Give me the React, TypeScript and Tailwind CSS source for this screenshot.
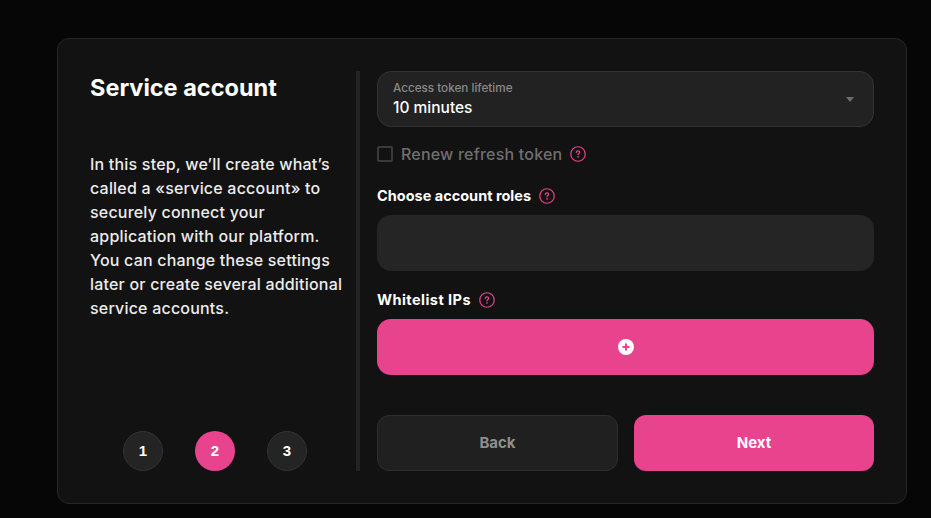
const font = "font-['Inter','Noto_Sans',sans-serif]";

const HelpIcon = () => (
  <svg width="16" height="16" viewBox="0 0 16 16" fill="none" className="shrink-0">
    <circle cx="8" cy="8" r="7.25" stroke="#e8438d" strokeWidth="1.2" />
    <path d="M6.3 6.4c0-.9.7-1.5 1.7-1.5s1.7.6 1.7 1.4c0 1.2-1.7 1.3-1.7 2.5" stroke="#e8438d" strokeWidth="1.2" strokeLinecap="round" />
    <circle cx="8" cy="10.9" r="0.8" fill="#e8438d" />
  </svg>
);

const PlusIcon = () => (
  <svg width="16" height="16" viewBox="0 0 16 16">
    <circle cx="8" cy="8" r="8" fill="#fff" />
    <path d="M8 4.5v7M4.5 8h7" stroke="#e8438d" strokeWidth="2" />
  </svg>
);

const steps = [1, 2, 3];

export default function App() {
  return (
    <div className={`${font} min-h-[518px] h-[518px] overflow-hidden bg-[#060606] pt-[38px] pl-[57px]`}>
      <div className="flex w-[850px] h-[466px] rounded-[12px] border border-[#262626] bg-[#121212] pt-[32px] pl-[32px]">
        {/* left column */}
        <div className="flex flex-col w-[270px] h-[400px] border-r-4 border-[#232323]">
          <h1 className="mt-[1px] text-[23.5px] leading-[32px] font-bold text-white">Service account</h1>
          <p className="mt-[48px] w-[262px] text-[16px] tracking-[0.2px] leading-[24px] font-medium text-[#ececec]">
            In this step, we’ll create what’s called a «service account» to securely connect your application with our platform. You can change these settings later or create several additional service accounts.
          </p>
          <div className="mt-auto flex gap-[32px] pl-[33px]">
            {steps.map((n) => (
              <div
                key={n}
                className={
                  n === 2
                    ? "flex items-center justify-center w-[40px] h-[40px] rounded-full bg-[#e8438d] text-white text-[15px] font-semibold font-['Liberation_Sans',sans-serif]"
                    : "flex items-center justify-center w-[40px] h-[40px] rounded-full bg-[#242424] border border-[#333333] text-white text-[15px] font-semibold font-['Liberation_Sans',sans-serif]"
                }
              >
                {n}
              </div>
            ))}
          </div>
        </div>

        {/* right column */}
        <div className="flex flex-col w-[497px] h-[400px] ml-[17px]">
          <div className="flex items-center justify-between h-[56px] rounded-[14px] border border-[#333333] bg-[#222222] pl-[15px] pr-[19px]">
            <div>
              <div className="text-[11.7px] leading-[14px] font-medium text-[#8a8a8a]">Access token lifetime</div>
              <div className="mt-[3px] text-[15.5px] leading-[20px] font-medium text-white">10 minutes</div>
            </div>
            <div className="w-0 h-0 border-x-[4px] border-x-transparent border-t-[5px] border-t-[#6e6e6e]" />
          </div>

          <div className="flex items-center mt-[18px] h-[18px]">
            <div className="w-[16px] h-[16px] rounded-[2px] border-2 border-[#3a3a3a]" />
            <span className="ml-[8px] text-[16px] tracking-[0.2px] font-medium text-[#6f6f6f]">Renew refresh token</span>
            <span className="ml-[8px] flex"><HelpIcon /></span>
          </div>

          <div className="flex items-center mt-[24px] h-[18px]">
            <span className="text-[14.5px] font-bold text-white">Choose account roles</span>
            <span className="ml-[8px] flex"><HelpIcon /></span>
          </div>

          <div className="mt-[10px] h-[56px] rounded-[14px] bg-[#252525]" />

          <div className="flex items-center mt-[20px] h-[18px]">
            <span className="text-[14.5px] tracking-[0.45px] font-bold text-white">Whitelist IPs</span>
            <span className="ml-[8px] flex"><HelpIcon /></span>
          </div>

          <button className="mt-[10px] flex items-center justify-center h-[56px] rounded-[14px] bg-[#e8438d]">
            <PlusIcon />
          </button>

          <div className="mt-auto flex gap-[16px]">
            <button className="w-[241px] h-[56px] rounded-[12px] border border-[#2e2e2e] bg-[#202020] text-[15px] font-bold text-[#8f8f8f]">Back</button>
            <button className="w-[240px] h-[56px] rounded-[12px] bg-[#e8438d] text-[15px] font-bold text-white">Next</button>
          </div>
        </div>
      </div>
    </div>
  );
}
